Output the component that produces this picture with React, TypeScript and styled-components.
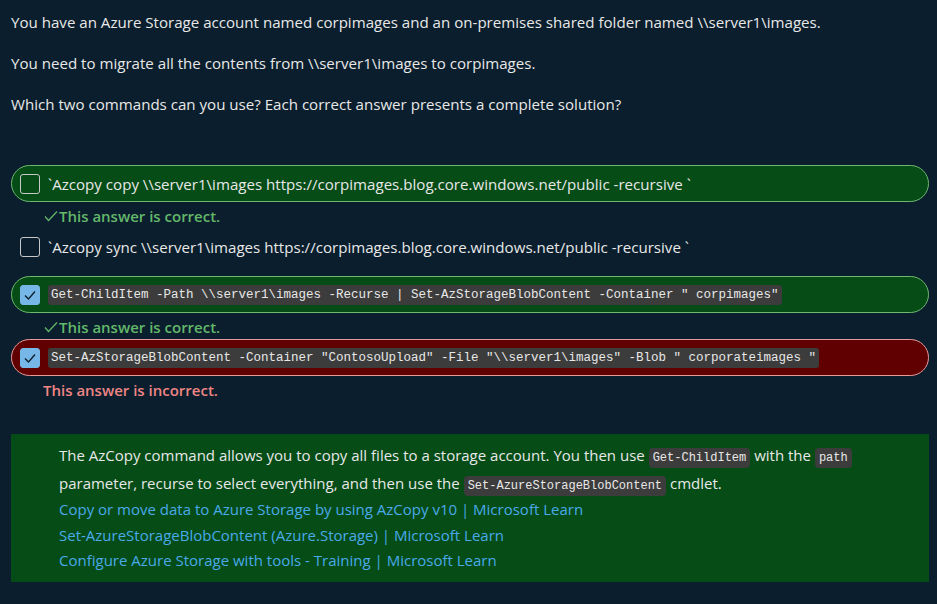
import React from "react";
import styled, { createGlobalStyle } from "styled-components";

const GlobalStyle = createGlobalStyle`
  html, body {
    margin: 0;
    padding: 0;
    background: #0a1e2d;
  }
  body {
    font-family: "Open Sans", "Liberation Sans", sans-serif;
    color: #e8e8e8;
  }
`;

type Option = {
  text: string;
  code?: boolean;
  checked?: boolean;
  status?: "correct" | "incorrect";
};

const options: Option[] = [
  {
    text: "`Azcopy copy \\\\server1\\images https://corpimages.blog.core.windows.net/public -recursive `",
    status: "correct",
  },
  {
    text: "`Azcopy sync \\\\server1\\images https://corpimages.blog.core.windows.net/public -recursive `",
  },
  {
    text: 'Get-ChildItem -Path \\\\server1\\images -Recurse | Set-AzStorageBlobContent -Container " corpimages"',
    code: true,
    checked: true,
    status: "correct",
  },
  {
    text: 'Set-AzStorageBlobContent -Container "ContosoUpload" -File "\\\\server1\\images" -Blob " corporateimages "',
    code: true,
    checked: true,
    status: "incorrect",
  },
];

const links = [
  "Copy or move data to Azure Storage by using AzCopy v10 | Microsoft Learn",
  "Set-AzureStorageBlobContent (Azure.Storage) | Microsoft Learn",
  "Configure Azure Storage with tools - Training | Microsoft Learn",
];

function App() {
  return (
    <Page>
      <GlobalStyle />
      <Question>
        You have an Azure Storage account named corpimages and an on-premises shared folder named
        \\server1\images.
      </Question>
      <Question>You need to migrate all the contents from \\server1\images to corpimages.</Question>
      <Question>Which two commands can you use? Each correct answer presents a complete solution?</Question>

      <OptionList>
        {options.map((opt, i) => (
          <OptionItem key={i} $spaced={!opt.status}>
            <OptionRow $status={opt.status}>
              <Checkbox $checked={opt.checked}>
                {opt.checked && (
                  <svg width="14" height="14" viewBox="0 0 14 14">
                    <polyline points="2,7.5 5.5,11 12,3.5" fill="none" stroke="#10202c" strokeWidth="1.4" />
                  </svg>
                )}
              </Checkbox>
              {opt.code ? <OptionCode>{opt.text}</OptionCode> : <OptionText>{opt.text}</OptionText>}
            </OptionRow>
            {opt.status === "correct" && (
              <Feedback $status="correct">
                <svg width="14" height="14" viewBox="0 0 14 14">
                  <polyline points="1,7.5 4.5,11.5 13,2.5" fill="none" stroke="#63b86a" strokeWidth="1.2" />
                </svg>
                This answer is correct.
              </Feedback>
            )}
            {opt.status === "incorrect" && <Feedback $status="incorrect">This answer is incorrect.</Feedback>}
          </OptionItem>
        ))}
      </OptionList>

      <Explanation>
        <ExplanationText>
          The AzCopy command allows you to copy all files to a storage account. You then use{" "}
          <InlineCode>Get-ChildItem</InlineCode> with the <InlineCode>path</InlineCode> parameter, recurse to
          select everything, and then use the <InlineCode>Set-AzureStorageBlobContent</InlineCode> cmdlet.
        </ExplanationText>
        {links.map((l) => (
          <DocLink key={l} href="#">
            {l}
          </DocLink>
        ))}
      </Explanation>
    </Page>
  );
}

const Page = styled.div`
  width: 937px;
  height: 604px;
  box-sizing: border-box;
  padding: 10px 8px 0 11px;
  overflow: hidden;
`;

const Question = styled.p`
  margin: 0 0 17px;
  font-size: 15.1px;
  line-height: 24px;
`;

const OptionList = styled.div`
  margin-top: 49px;
  display: flex;
  flex-direction: column;
`;

const OptionItem = styled.div<{ $spaced: boolean }>`
  display: flex;
  flex-direction: column;
  margin-bottom: ${(p) => (p.$spaced ? "11px" : "0")};
`;

const OptionRow = styled.div<{ $status?: "correct" | "incorrect" }>`
  height: 37px;
  box-sizing: border-box;
  display: flex;
  align-items: center;
  gap: 8px;
  padding: 0 8px;
  border-radius: 19px;
  border: 1px solid
    ${(p) => (p.$status === "correct" ? "#6fb86f" : p.$status === "incorrect" ? "#e79a9a" : "transparent")};
  background: ${(p) => (p.$status === "correct" ? "#054c16" : p.$status === "incorrect" ? "#610000" : "transparent")};
`;

const Checkbox = styled.span<{ $checked?: boolean }>`
  width: 20px;
  height: 20px;
  flex: none;
  box-sizing: border-box;
  border-radius: 3px;
  display: flex;
  align-items: center;
  justify-content: center;
  border: 1px solid ${(p) => (p.$checked ? "#76b7e8" : "#c8c8c8")};
  background: ${(p) => (p.$checked ? "#76b7e8" : "transparent")};
`;

const OptionText = styled.span`
  font-size: 15.1px;
  white-space: nowrap;
`;

const OptionCode = styled.code`
  font-family: "Liberation Mono", "DejaVu Sans Mono", monospace;
  font-size: 12.5px;
  line-height: 20px;
  padding: 0 3px;
  background: #3c3c3c;
  border-radius: 3px;
  white-space: pre;
  color: #e8e8e8;
`;

const Feedback = styled.div<{ $status: "correct" | "incorrect" }>`
  height: 26px;
  box-sizing: border-box;
  padding-top: 1px;
  display: flex;
  align-items: center;
  gap: 1px;
  padding-left: ${(p) => (p.$status === "correct" ? "33px" : "32px")};
  font-size: 15px;
  font-weight: 600;
  color: ${(p) => (p.$status === "correct" ? "#63b86a" : "#ef8585")};
`;

const Explanation = styled.div`
  margin-top: 32px;
  width: 918px;
  box-sizing: border-box;
  background: #054c16;
  padding: 8px 20px 8px 48px;
  display: flex;
  flex-direction: column;
`;

const ExplanationText = styled.p`
  margin: 0;
  font-size: 15px;
  line-height: 27.5px;
`;

const InlineCode = styled.code`
  font-family: "Liberation Mono", "DejaVu Sans Mono", monospace;
  font-size: 12px;
  line-height: 1;
  padding: 3px 4px;
  background: #3c3c3c;
  border-radius: 4px;
  color: #e8e8e8;
`;

const DocLink = styled.a`
  font-size: 15px;
  line-height: 25.5px;
  color: #4aa9e9;
  text-decoration: none;
`;

export default App;
